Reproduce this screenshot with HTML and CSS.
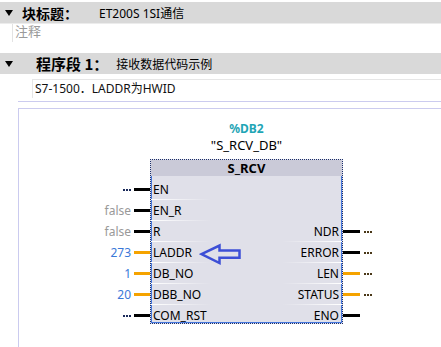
FILE: index.html
```html
<!DOCTYPE html>
<html>
<head>
<meta charset="utf-8">
<link rel="stylesheet" href="styles.css">
</head>
<body>
<div class="blk-head"><span class="tri"></span><span class="ttl">块标题：</span><span class="sub">ET200S 1SI通信</span></div>
<div class="blk-comment">注释</div>
<div class="net-head"><span class="tri"></span><span class="ttl">程序段 1：</span><span class="sub">接收数据代码示例</span></div>
<div class="net-comment">S7-1500．LADDR为HWID</div>
<div class="net-sep"></div>
<div class="net-body">
  <div class="titles">
    <div class="inst">%DB2</div>
    <div class="iname">"S_RCV_DB"</div>
  </div>
  <div class="fbrow">
    <div class="ins">
      <div class="io"><span class="dots dl"></span><span class="wire"></span></div>
      <div class="io"><span class="vf">false</span><span class="wire"></span></div>
      <div class="io"><span class="vf">false</span><span class="wire"></span></div>
      <div class="io"><span class="vn">273</span><span class="wire or"></span></div>
      <div class="io"><span class="vn">1</span><span class="wire or"></span></div>
      <div class="io"><span class="vn">20</span><span class="wire or"></span></div>
      <div class="io"><span class="dots dl"></span><span class="wire"></span></div>
    </div>
    <div class="box">
      <div class="bh">S_RCV</div>
      <div class="pins">
        <div class="prow"><span class="pl sep">EN</span><span class="pr"></span></div>
        <div class="prow"><span class="pl sep">EN_R</span><span class="pr"></span></div>
        <div class="prow"><span class="pl sep">R</span><span class="pr sep">NDR</span></div>
        <div class="prow"><span class="pl sep">LADDR</span><span class="pr sep">ERROR</span></div>
        <div class="prow"><span class="pl sep">DB_NO</span><span class="pr sep">LEN</span></div>
        <div class="prow"><span class="pl sep">DBB_NO</span><span class="pr sep">STATUS</span></div>
        <div class="prow last"><span class="pl">COM_RST</span><span class="pr">ENO</span></div>
      </div>
      <svg class="arrow" width="44" height="23" viewBox="0 0 44 23"><polygon points="2.5,11.2 20.5,2.5 20.5,7.5 40.5,7.5 40.5,14.8 20.5,14.8 20.5,20" fill="none" stroke="#3d4fd6" stroke-width="2.5" stroke-linejoin="miter"/></svg>
    </div>
    <div class="outs">
      <div class="io"></div>
      <div class="io"></div>
      <div class="io"><span class="wire"></span><span class="dots dr"></span></div>
      <div class="io"><span class="wire"></span><span class="dots dr"></span></div>
      <div class="io"><span class="wire or"></span><span class="dots dr"></span></div>
      <div class="io"><span class="wire or"></span><span class="dots dr"></span></div>
      <div class="io"><span class="wire"></span></div>
    </div>
  </div>
</div>
</body>
</html>
```
FILE: styles.css
```css
html, body {
  margin: 0;
  padding: 0;
  background: #fff;
}
body {
  width: 441px;
  height: 347px;
  overflow: hidden;
  font-family: "Noto Sans", "Noto Sans CJK SC", sans-serif;
  color: #000;
}
.blk-head {
  margin-top: 2px;
  height: 21px;
  background: #d9d9d9;
  border-bottom: 1px solid #ececec;
  display: flex;
  align-items: center;
  white-space: nowrap;
}
.tri {
  width: 0;
  height: 0;
  border-left: 4px solid transparent;
  border-right: 4px solid transparent;
  border-top: 6px solid #000;
  margin-left: 5px;
}
.blk-head .ttl {
  margin-left: 9px;
  font-size: 14px;
  font-weight: bold;
  font-family: "Noto Sans CJK SC", sans-serif;
}
.blk-head .sub {
  margin-left: 21px;
  font-size: 12px;
}
.blk-comment {
  margin-left: 12px;
  border-left: 1px solid #e3e3e3;
  height: 18px;
  line-height: 15px;
  font-size: 13px;
  color: #9a9a9a;
  padding-left: 2px;
}
.net-head {
  margin-top: 11px;
  height: 21px;
  background: #d9d9d9;
  display: flex;
  align-items: center;
  white-space: nowrap;
}
.net-head .ttl {
  margin-left: 23px;
  font-size: 15px;
  font-weight: bold;
  font-family: "Noto Sans CJK SC", sans-serif;
}
.net-head .sub {
  margin-left: 8px;
  font-size: 12px;
}
.net-comment {
  margin: 5px 0 0 32px;
  border-top: 1px solid #e6e6e6;
  border-left: 1px solid #e6e6e6;
  height: 18px;
  line-height: 17px;
  font-size: 12px;
  padding-left: 2px;
  color: #111;
  white-space: nowrap;
}
.net-sep {
  margin: 3px 0 0 18px;
  border-top: 1px solid #cbcbef;
}
.net-body {
  margin: 6px 0 0 18px;
  border-top: 1px solid #cbcbef;
  border-left: 1px solid #cbcbef;
  height: 227px;
  padding-top: 11px;
}
.titles {
  margin-left: 131px;
  width: 193px;
  text-align: center;
  margin-bottom: 5px;
}
.inst {
  font-size: 12px;
  font-weight: bold;
  color: #1fa5b5;
  line-height: 17px;
}
.iname {
  font-size: 13px;
  line-height: 17px;
}
.fbrow {
  display: flex;
  margin-left: 71px;
}
.ins {
  width: 60px;
  padding-top: 20px;
}
.outs {
  padding-top: 20px;
}
.io {
  height: 21px;
  display: flex;
  align-items: center;
  font-size: 12px;
}
.ins .io {
  justify-content: flex-end;
}
.wire {
  width: 16px;
  height: 3px;
  background: #000;
  margin-left: 3px;
}
.outs .wire {
  width: 17px;
  margin-left: 0;
  margin-right: 4px;
}
.wire.or {
  background: #f5a300;
}
.dots {
  width: 8px;
  height: 2px;
  background: repeating-linear-gradient(to right, currentColor 0 2px, transparent 2px 3px);
}
.dl { color: #1a2a5a; }
.dr { color: #4a3818; }
.vf { color: #999; }
.vn { color: #3a78d8; }
.box {
  position: relative;
  width: 193px;
  height: 165px;
  box-sizing: border-box;
  border: 1px dotted #1c2f6b;
  box-shadow: inset 1px 1px 0 #4477dd, inset -1px -1px 0 #4477dd;
  background: #e0e0e9;
}
.bh {
  height: 16px;
  line-height: 16px;
  background: #cacad8;
  text-align: center;
  font-size: 13px;
  font-weight: bold;
}
.pins {
  padding-top: 3px;
}
.prow {
  height: 21px;
  display: flex;
  font-size: 12px;
  line-height: 21px;
}
.prow.last {
  height: 19px;
}
.pl, .pr {
  flex: 1;
}
.pl {
  padding-left: 2px;
}
.pr {
  text-align: right;
  padding-right: 3px;
}
.pl.sep {
  background: linear-gradient(to right, #ffffff, rgba(255,255,255,0)) left bottom / 60px 1px no-repeat;
}
.pr.sep {
  background: linear-gradient(to left, #ffffff, rgba(255,255,255,0)) right bottom / 60px 1px no-repeat;
}
.arrow {
  position: absolute;
  left: 48px;
  top: 83px;
}
```
